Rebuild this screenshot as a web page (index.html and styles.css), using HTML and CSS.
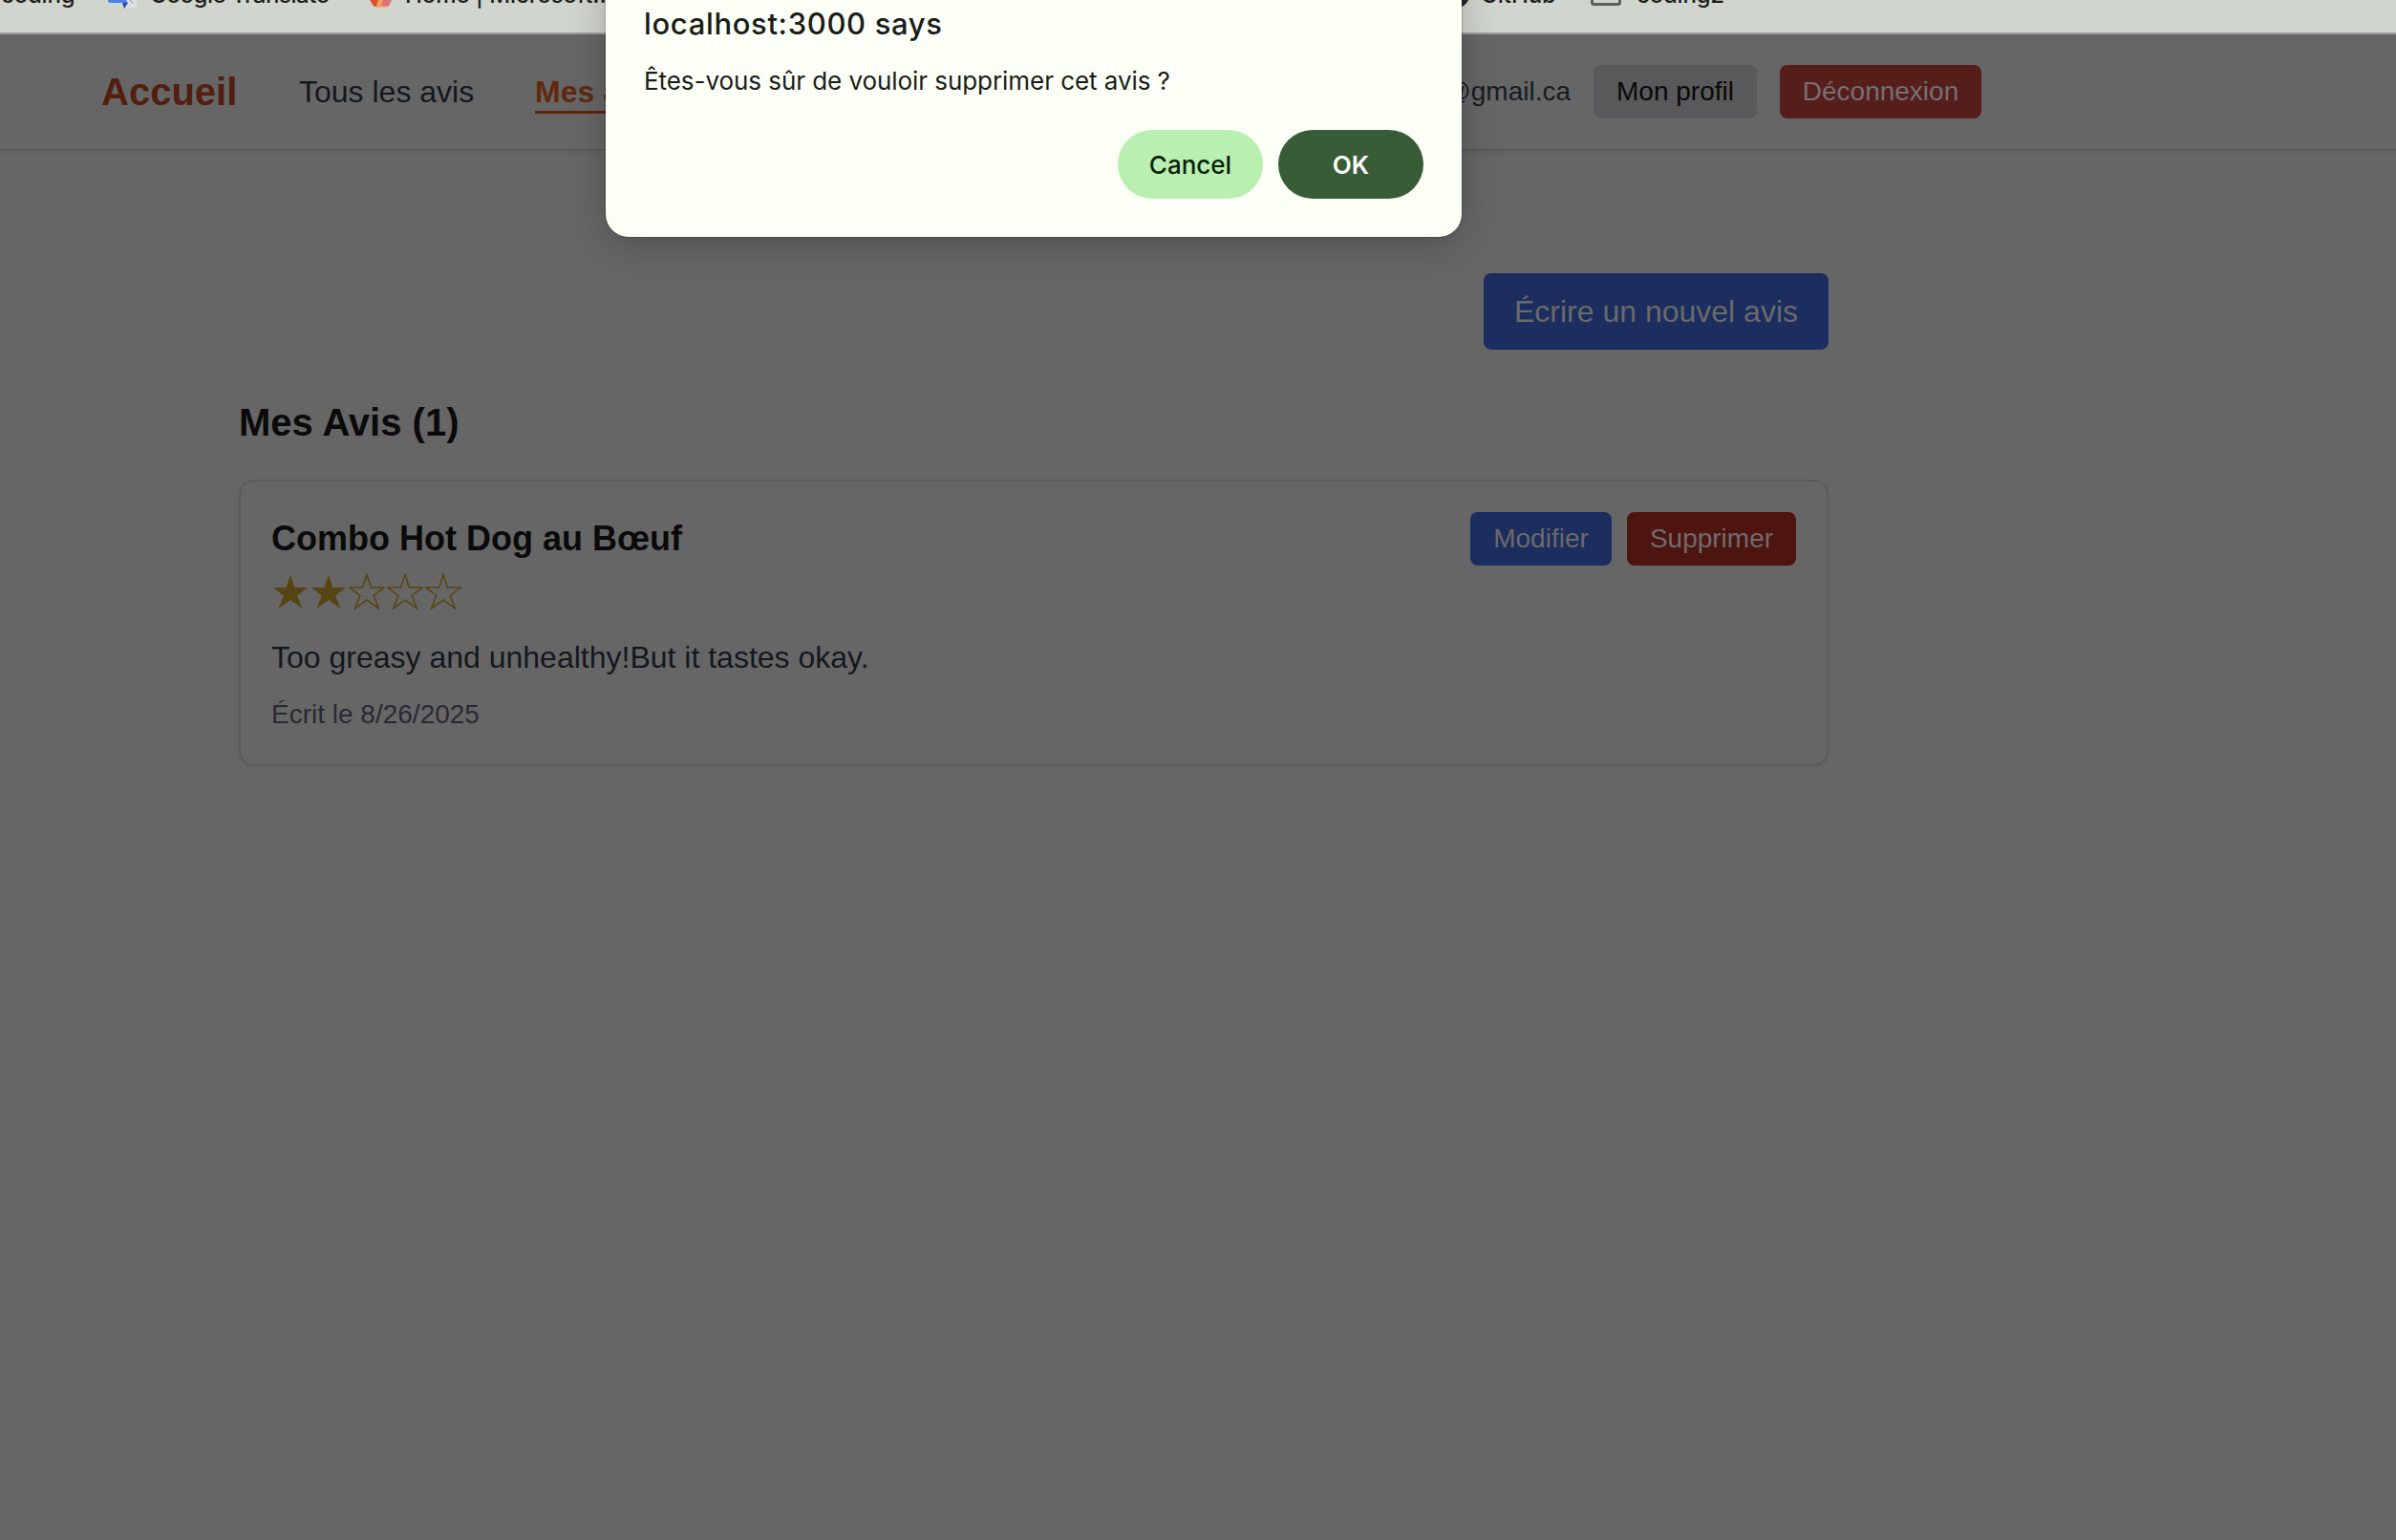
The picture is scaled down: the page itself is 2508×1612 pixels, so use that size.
FILE: index.html
```html
<!DOCTYPE html>
<html lang="fr">
<head>
<meta charset="utf-8">
<title>Mes avis</title>
<link rel="stylesheet" href="styles.css">
</head>
<body>
<svg class="defs" width="0" height="0" aria-hidden="true">
  <symbol id="star" viewBox="0 0 38 38"><path d="M19 1.500 23.400 15H37.200L26.100 23.400 31.500 37 19 28 6.500 37 11.900 23.400 .8 15H14.600Z"/></symbol>
</svg>
<div class="bookmarks">
  <span class="bm bm-coding">coding</span>
  <svg class="ico ico-translate" width="32" height="10" viewBox="0 0 32 10"><path d="M16 0H30V8H19Z" fill="#dcdee2"/><path d="M0 0H19L21 3H2Q0 3 0 1Z" fill="#4c82ee"/><path d="M15 3H21L17 9Z" fill="#2a48b0"/><path d="M23 0 26 3" stroke="#6b8ccc" fill="none"/></svg>
  <span class="bm bm-translate">Google Translate</span>
  <svg class="ico ico-home" width="24" height="8" viewBox="0 0 24 8"><path d="M0 0H9L7 7Q4 7 3 5Z" fill="#e2502f"/><path d="M9 0H23L20 6Q19 7.500 17 7.500H6Q8 6 9 0Z" fill="#f5a054"/><path d="M14 0H23L20 6H12Z" fill="#e0707e"/></svg>
  <span class="bm bm-home">Home | Microsoft...</span>
  <svg class="ico ico-github" width="28" height="9" viewBox="0 0 28 9"><path d="M0 0H28Q26 5 19 8V4H9V8Q2 5 0 0Z" fill="#22262a"/></svg>
  <span class="bm bm-github">GitHub</span>
  <svg class="ico ico-folder" width="32" height="6" viewBox="0 0 32 6"><path d="M1.500-2V2.500Q1.500 4.500 3.500 4.500H28.500Q30.500 4.500 30.500 2.500V-2" fill="none" stroke="#5c605c" stroke-width="3"/></svg>
  <span class="bm bm-coding2">coding2</span>
</div>
<nav class="nav">
  <a class="brand">Accueil</a>
  <a class="link">Tous les avis</a>
  <a class="link active">Mes avis</a>
  <div class="account">
    <span class="email">user@gmail.ca</span>
    <button class="btn gray">Mon profil</button>
    <button class="btn rose">Déconnexion</button>
  </div>
</nav>
<main class="main">
  <button class="btn new">Écrire un nouvel avis</button>
  <h1 class="heading">Mes Avis (1)</h1>
  <article class="card">
    <div class="card-head">
      <h2 class="dish">Combo Hot Dog au Bœuf</h2>
      <div class="actions">
        <button class="btn blue">Modifier</button>
        <button class="btn red">Supprimer</button>
      </div>
    </div>
    <div class="stars">
      <svg class="star full"><use href="#star"/></svg>
      <svg class="star full"><use href="#star"/></svg>
      <svg class="star"><use href="#star"/></svg>
      <svg class="star"><use href="#star"/></svg>
      <svg class="star"><use href="#star"/></svg>
    </div>
    <p class="comment">Too greasy and unhealthy!But it tastes okay.</p>
    <p class="date">Écrit le 8/26/2025</p>
  </article>
</main>
<div class="dialog" role="alertdialog">
  <div class="dialog-title"><span>localhost:3000 says</span></div>
  <div class="dialog-text"><span>Êtes-vous sûr de vouloir supprimer cet avis ?</span></div>
  <div class="dialog-actions">
    <button class="pill cancel">Cancel</button>
    <button class="pill ok">OK</button>
  </div>
</div>
</body>
</html>
```
FILE: styles.css
```css
* { box-sizing: border-box; }
body {
  margin: 0;
  height: 1612px;
  overflow: hidden;
  position: relative;
  background: #666;
  font-family: "Liberation Sans", Arial, sans-serif;
}
button { border: 0; padding: 0; font-family: inherit; }
h1, h2, p { margin: 0; }
.defs { position: absolute; }

.bookmarks {
  display: flex;
  align-items: flex-start;
  height: 36px;
  overflow: hidden;
  background: #d0d5cd;
  border-bottom: 2px solid #9c9f9a;
  font: 500 24px/30px Inter, sans-serif;
  color: #1c1f1c;
}
.bm { margin-top: -20px; white-space: nowrap; flex: none; }
.ico { flex: none; }
.bm-coding { width: 113px; padding-left: 1px; letter-spacing: -.2px; }
.ico-translate { margin-right: 12px; }
.bm-translate { width: 230px; letter-spacing: -.45px; }
.ico-home { margin-right: 13px; }
.bm-home { width: 1085px; letter-spacing: -.1px; }
.ico-github { margin-right: 13px; }
.bm-github { width: 115px; letter-spacing: -.1px; }
.ico-folder { margin-right: 16px; }
.bm-coding2 { letter-spacing: -.2px; }

.nav {
  display: flex;
  align-items: center;
  height: 122px;
  padding: 0 434px 0 106px;
  border-bottom: 2px solid #5b5b5b;
  box-shadow: 0 2px 4px rgba(0, 0, 0, .05);
}
.brand { width: 207px; font-size: 40px; font-weight: 700; color: #521e0e; }
.link { width: 247px; font-size: 32px; color: #14181d; }
.link.active {
  width: auto;
  font-weight: 700;
  color: #602810;
  border-bottom: 3px solid #5e260e;
  line-height: 38px;
  padding-bottom: 1px;
  margin-top: 3px;
}
.account { display: flex; align-items: center; gap: 24px; margin-left: auto; }
.email { font-size: 28px; color: #181b22; }
.btn { height: 56px; border-radius: 8px; font-size: 28px; color: #6a6a6a; }
.gray { width: 171px; background: #59595b; color: #080808; }
.rose { width: 211px; background: #561e1b; color: #757070; }

.main { display: flex; flex-direction: column; width: 1664px; margin: 128px 0 0 250px; }
.new { align-self: flex-end; width: 361px; height: 80px; font-size: 32px; background: #1c2d5f; }
.heading { margin-top: 53px; font-size: 40px; line-height: 46px; color: #0a0a0a; }
.card {
  height: 300px;
  margin-top: 37px;
  padding: 32px;
  border: 2px solid #5b5b5b;
  border-radius: 16px;
  box-shadow: 0 2px 4px rgba(0, 0, 0, .05);
}
.card-head { display: flex; justify-content: space-between; align-items: center; }
.dish { font-size: 36px; line-height: 42px; color: #0a0a0a; }
.actions { display: flex; gap: 16px; }
.blue { width: 148px; background: #1c2d5f; }
.red { width: 177px; background: #4d1410; color: #6f6c6c; }
.stars { display: flex; gap: 2px; height: 38px; margin-top: 8px; padding-left: 1px; }
.star { width: 38px; height: 38px; fill: none; stroke: #5a4614; stroke-width: 1.6; }
.star.full { fill: #574413; stroke: none; }
.comment { margin-top: 32px; font-size: 32px; line-height: 36px; color: #14181d; }
.date { margin-top: 26px; font-size: 28px; line-height: 32px; color: #282a31; }

.dialog {
  position: absolute;
  left: 634px;
  top: -40px;
  width: 896px;
  height: 288px;
  padding: 40px;
  border-radius: 24px;
  background: #fcfff6;
  color: #1a1c19;
  font-family: Inter, sans-serif;
  box-shadow: 0 0 2px rgba(0, 0, 0, .5), 0 8px 40px rgba(0, 0, 0, .22);
}
.dialog-title { margin-top: 5px; font-size: 31px; line-height: 40px; font-weight: 500; letter-spacing: .65px; }
.dialog-text { margin-top: 23px; font-size: 26px; line-height: 34px; letter-spacing: -.06px; }
.dialog-actions { display: flex; justify-content: flex-end; gap: 16px; margin-top: 34px; }
.pill { width: 152px; height: 72px; border-radius: 36px; font-size: 26px; font-weight: 500; }
.cancel { background: #b9efb0; color: #0b1f0c; }
.ok { background: #385c35; color: #fff; font-weight: 600; }
```
